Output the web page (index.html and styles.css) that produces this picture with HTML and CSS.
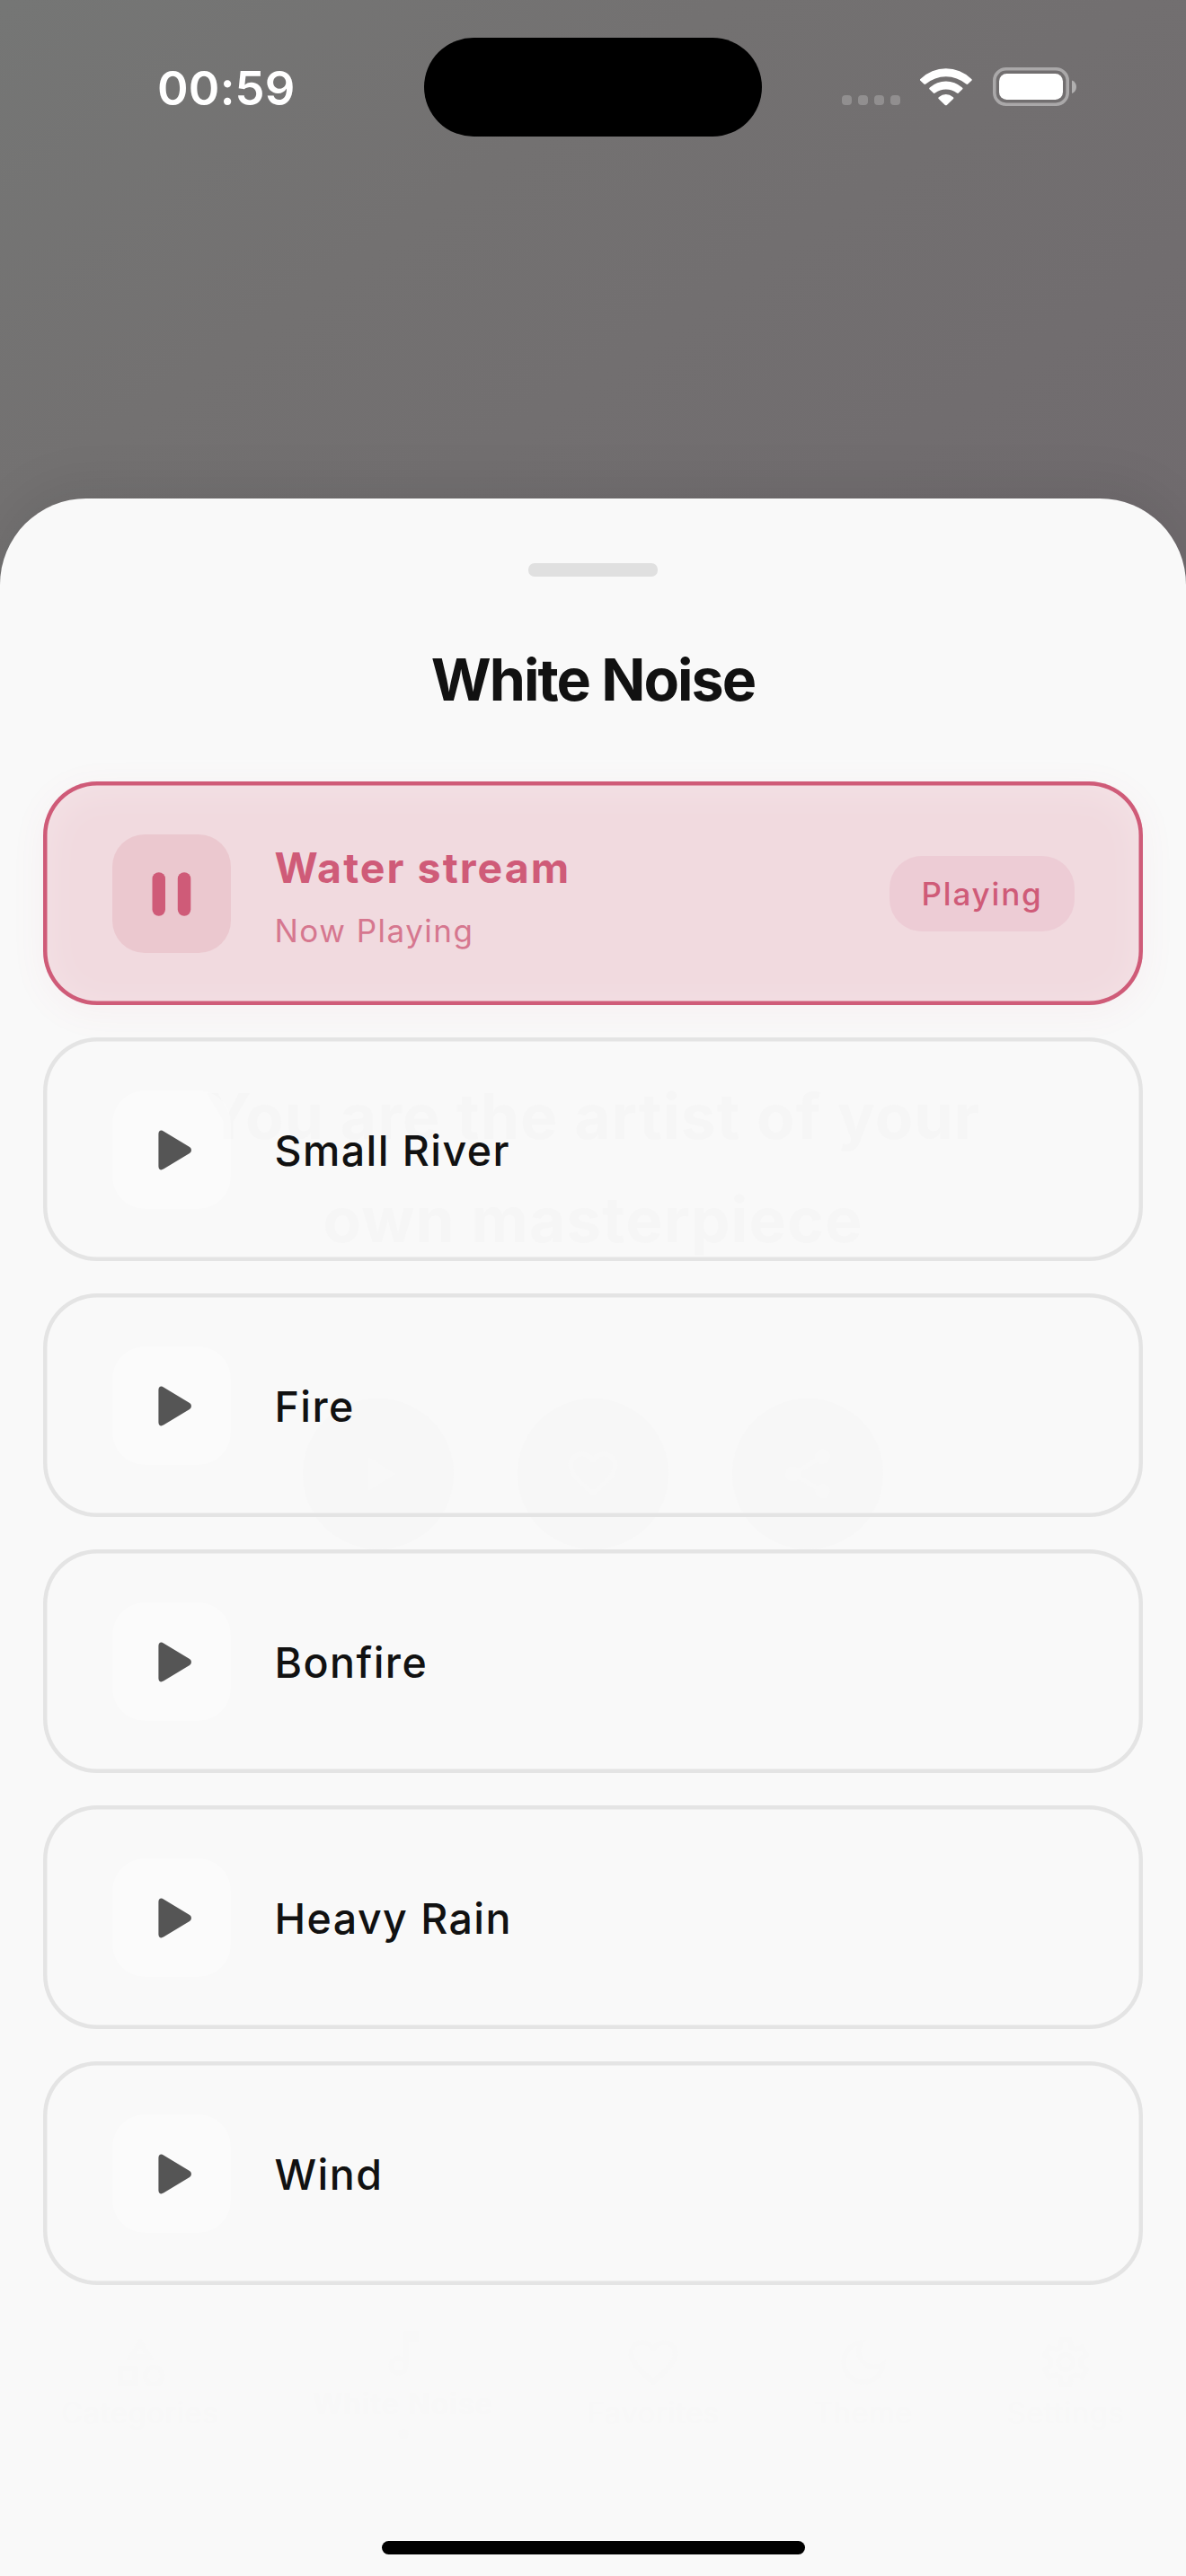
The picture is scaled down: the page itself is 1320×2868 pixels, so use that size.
FILE: index.html
```html
<!DOCTYPE html>
<html lang="en">
<head>
<meta charset="utf-8">
<title>White Noise</title>
<link rel="stylesheet" href="styles.css">
</head>
<body>
<svg width="0" height="0" class="defs" aria-hidden="true">
  <symbol id="play" viewBox="0 0 66 66"><path d="M18.4 15.5C18.4 11.8 21.2 10.6 24 12.4L53 30C55.6 31.8 55.6 35.2 53 37L24 54.6C21.2 56.4 18.4 55.2 18.4 51.5Z"/></symbol>
  <symbol id="pause" viewBox="0 0 66 66"><rect x="11.5" y="9.2" width="14.5" height="48.6" rx="7.2"/><rect x="39.8" y="9.2" width="14.5" height="48.6" rx="7.2"/></symbol>
  <symbol id="heart" viewBox="0 0 24 24"><path d="M16.5 3c-1.74 0-3.41.81-4.5 2.09C10.91 3.81 9.24 3 7.5 3 4.42 3 2 5.42 2 8.5c0 3.78 3.4 6.86 8.55 11.54L12 21.35l1.45-1.32C18.6 15.36 22 12.28 22 8.5 22 5.42 19.58 3 16.5 3zm-4.4 15.55l-.1.1-.1-.1C7.14 14.24 4 11.39 4 8.5 4 6.5 5.5 5 7.5 5c1.54 0 3.04.99 3.57 2.36h1.87C13.46 5.99 14.96 5 16.5 5c2 0 3.5 1.5 3.5 3.5 0 2.89-3.14 5.74-7.9 10.05z"/></symbol>
</svg>
<div class="phone">
  <header class="status">
    <div class="time">00:59</div>
    <div class="island"></div>
    <div class="indicators">
      <div class="cell"><i></i><i></i><i></i><i></i></div>
      <svg class="wifi" viewBox="434 105 173 127" fill="#fff">
        <path d="M436 142.500A120 120 0 0 1 604 142.500Q608 145.500 605 148L593 159.500Q590.500 162 587 159.300A105 105 0 0 0 453 159.300Q449.500 162 447 159.500L435 148Q432 145.500 436 142.500Z"/>
        <path d="M467 171A79 79 0 0 1 573 171Q578 174 575 177L562.500 189Q560 192 556 189.300A60 60 0 0 0 484 189.300Q480 192 477.500 189L465 177Q462.500 174 467 171Z"/>
        <path d="M497 202.500A36 36 0 0 1 543 202.500Q548 205.500 544.500 208.500L523 229.500Q520 232 517 229.500L495.500 208.500Q492 205.500 497 202.500Z"/>
      </svg>
      <svg class="battery" viewBox="0 0 94 43">
        <rect x="1.8" y="1.800" width="81.400" height="39.400" rx="13" fill="none" stroke="#fff" stroke-opacity=".4" stroke-width="3.600"/>
        <rect x="7" y="7" width="71" height="29" rx="8.500" fill="#fff"/>
        <path d="M88 14.500C91 15.500 93 18.200 93 21.700S91 28 88 29Z" fill="#fff" fill-opacity=".45"/>
      </svg>
    </div>
  </header>

  <main class="sheet">
    <div class="behind" aria-hidden="true">
      <p class="quote">You are the artist of your<br>own masterpiece</p>
      <div class="actions">
        <span><svg viewBox="0 0 24 24"><path d="M8 5v14l11-7z"/></svg></span>
        <span><svg viewBox="0 0 24 24"><use href="#heart"/></svg></span>
        <span><svg viewBox="0 0 24 24"><path d="M18 16.080c-.76 0-1.440.3-1.960.77L8.910 12.700c.05-.23.090-.46.090-.7s-.04-.47-.09-.7l7.050-4.110c.54.5 1.250.81 2.040.81 1.660 0 3-1.340 3-3s-1.340-3-3-3-3 1.340-3 3c0 .24.040.47.090.7L8.040 9.810C7.500 9.310 6.790 9 6 9c-1.660 0-3 1.340-3 3s1.340 3 3 3c.79 0 1.500-.31 2.040-.81l7.120 4.160c-.05.21-.08.43-.08.65 0 1.610 1.310 2.920 2.920 2.920s2.920-1.310 2.920-2.920-1.310-2.920-2.920-2.920z"/></svg></span>
      </div>
      <nav class="tabs">
        <div class="tab"><svg viewBox="0 0 24 24"><path d="M12 2l-5.500 9h11L12 2zm0 3.840L13.930 9h-3.870L12 5.840zM17.500 13c-2.490 0-4.500 2.010-4.500 4.500s2.010 4.500 4.500 4.500 4.500-2.010 4.500-4.500-2.010-4.500-4.500-4.500zm0 7c-1.380 0-2.500-1.120-2.500-2.500s1.120-2.500 2.500-2.500 2.500 1.120 2.500 2.500-1.120 2.500-2.500 2.500zM3 21.500h8v-8H3v8zm2-6h4v4H5v-4z"/></svg><span>Categories</span></div>
        <div class="tab tab-on"><svg viewBox="0 0 24 24"><path d="M12 3l.01 10.550c-.59-.34-1.270-.55-2-.55C7.790 13 6 14.790 6 17s1.790 4 4.010 4S14 19.210 14 17V7h4V3h-6zm-1.990 16c-1.100 0-2-.9-2-2s.9-2 2-2 2 .9 2 2-.9 2-2 2z"/></svg><span>White Noise</span><i></i></div>
        <div class="tab"><svg viewBox="0 0 24 24"><use href="#heart"/></svg><span>Favorites</span></div>
        <div class="tab"><svg viewBox="0 0 24 24"><path d="M9.370 5.510C9.190 6.150 9.100 6.820 9.100 7.500c0 4.080 3.320 7.400 7.400 7.400.68 0 1.350-.09 1.990-.27C17.450 17.190 14.930 19 12 19c-3.860 0-7-3.140-7-7 0-2.930 1.810-5.450 4.370-6.490zM12 3c-4.970 0-9 4.030-9 9s4.030 9 9 9 9-4.030 9-9c0-.46-.04-.92-.1-1.360-.98 1.370-2.580 2.260-4.400 2.260-2.980 0-5.400-2.420-5.400-5.400 0-1.810.89-3.420 2.260-4.400C12.920 3.040 12.460 3 12 3z"/></svg><span>Theme</span></div>
        <div class="tab"><svg viewBox="0 0 24 24"><g fill="none" stroke="#f8f8f8" stroke-width="2"><path d="M10.300 3h3.400l.5 2.800 1.900 1.100 2.600-1 1.700 3-2.100 1.800v2.600l2.100 1.800-1.700 3-2.600-1-1.900 1.100-.5 2.800h-3.400l-.5-2.800-1.900-1.100-2.600 1-1.700-3 2.100-1.800v-2.600L3.600 8.900l1.700-3 2.600 1 1.900-1.100z"/><circle cx="12" cy="12" r="3"/></g></svg><span>Settings</span></div>
      </nav>
    </div>

    <div class="content">
      <div class="handle"></div>
      <h1>White Noise</h1>
      <ul class="sounds">
        <li class="sound playing">
          <div class="toggle"><svg><use href="#pause"/></svg></div>
          <div class="label"><b>Water stream</b><small>Now Playing</small></div>
          <div class="badge">Playing</div>
        </li>
        <li class="sound"><div class="toggle"><svg><use href="#play"/></svg></div><div class="label"><b>Small River</b></div></li>
        <li class="sound"><div class="toggle"><svg><use href="#play"/></svg></div><div class="label"><b>Fire</b></div></li>
        <li class="sound"><div class="toggle"><svg><use href="#play"/></svg></div><div class="label"><b>Bonfire</b></div></li>
        <li class="sound"><div class="toggle"><svg><use href="#play"/></svg></div><div class="label"><b>Heavy Rain</b></div></li>
        <li class="sound"><div class="toggle"><svg><use href="#play"/></svg></div><div class="label"><b>Wind</b></div></li>
      </ul>
      <div class="home"></div>
    </div>
  </main>
</div>
</body>
</html>
```
FILE: styles.css
```css
* { box-sizing: border-box; margin: 0; padding: 0; }

body {
  width: 1320px;
  font-family: Inter, "Liberation Sans", sans-serif;
  color: #111;
}

.defs { position: absolute; }

.phone {
  display: flex;
  flex-direction: column;
  height: 2868px;
  overflow: hidden;
  background: linear-gradient(145deg, #757675 0%, #737171 15%, #706b6e 40%, #6b6367 100%);
}

/* Status bar */
.status {
  flex: none;
  display: grid;
  grid-template-columns: 472px 376px 472px;
  height: 555px;
  padding-top: 42px;
  align-items: start;
}

.time {
  padding: 24px 0 0 175px;
  font-size: 52.5px;
  font-weight: 600;
  line-height: 64px;
  letter-spacing: 0.2px;
  color: #fff;
}

.island {
  height: 110px;
  border-radius: 56px;
  background: #000;
}

.indicators {
  display: flex;
  align-items: flex-end;
  padding: 33px 0 0 89px;
}

.cell { display: flex; gap: 7px; padding-bottom: 1px; }
.cell i { width: 11px; height: 11px; border-radius: 4px; background: rgba(255, 255, 255, .22); }
.wifi { width: 58px; height: 43px; margin-left: 22px; }
.battery { width: 94px; height: 43px; margin-left: 23px; }

/* Bottom sheet */
.sheet {
  flex: 1;
  display: grid;
  border-radius: 96px 96px 0 0;
  background: #f9f9f9;
  box-shadow: 0 -12px 60px rgba(0, 0, 0, .08);
}

.behind, .content {
  grid-area: 1 / 1;
  display: flex;
  flex-direction: column;
  align-items: center;
}

.content { position: relative; padding-top: 72px; }

.handle { width: 144px; height: 15px; border-radius: 7px; background: #e0e0e0; }

h1 {
  margin: 76px 0 74px;
  font-size: 64.5px;
  font-weight: 700;
  line-height: 78px;
  letter-spacing: -1.95px;
}

.sounds {
  display: flex;
  flex-direction: column;
  gap: 36px;
  width: 1224px;
  list-style: none;
}

.sound {
  display: flex;
  align-items: center;
  height: 249px;
  padding: 0 76.5px;
  border-radius: 60px;
  box-shadow: inset 0 0 0 4.5px #e4e4e4;
}

.toggle {
  display: grid;
  place-items: center;
  width: 132px;
  height: 132px;
  border-radius: 36px;
  background: rgba(255, 255, 255, .3);
}

.toggle svg { width: 66px; height: 66px; fill: #555; }

.label {
  flex: 1;
  display: flex;
  flex-direction: column;
  padding: 2px 0 0 49px;
}

.label b {
  font-size: 46.5px;
  font-weight: 500;
  line-height: 60px;
  letter-spacing: 1.45px;
}

.label small {
  margin-top: 22px;
  font-size: 35px;
  line-height: 36px;
  letter-spacing: 1.5px;
  color: #d6778f;
}

.playing {
  background: #f1dadf;
  box-shadow:
    inset 0 0 0 4.5px #cf5b78,
    inset 0 6px 48px rgba(255, 255, 255, .28),
    0 8px 40px rgba(207, 91, 120, .06);
}

.playing .toggle { background: #ebc8cf; }
.playing .toggle svg { fill: #cf5b78; }
.playing .label { padding-top: 0; }
.playing .label b { font-weight: 700; letter-spacing: 2.05px; color: #cf5b78; }

.badge {
  padding: 0 35px 0 36px;
  border-radius: 36px;
  background: #edccd5;
  font-size: 35px;
  font-weight: 500;
  line-height: 84px;
  letter-spacing: 1.8px;
  color: #cf5b78;
}

.home {
  width: 471px;
  height: 15px;
  margin: auto 0 24px;
  border-radius: 8px;
  background: #000;
}

/* Player screen showing faintly through the sheet */
.quote {
  margin-top: 631px;
  font-size: 69.5px;
  font-weight: 700;
  line-height: 115px;
  letter-spacing: 1.1px;
  text-align: center;
  color: #f6f6f6;
}

.actions { display: flex; gap: 71px; margin-top: 141px; }

.actions span {
  display: grid;
  place-items: center;
  width: 168px;
  height: 168px;
  border-radius: 50%;
  background: #f7f7f7;
}

.actions svg { width: 66px; height: 66px; fill: #f8f8f8; }

.tabs {
  display: flex;
  align-items: center;
  gap: 105px;
  height: 130px;
  margin-top: 861px;
  font-size: 32px;
  line-height: 39px;
  letter-spacing: 1px;
  color: #f8f8f8;
}

.tab { display: flex; flex-direction: column; align-items: center; gap: 4px; }
.tab svg { width: 66px; height: 66px; fill: #f8f8f8; }
.tab-on { font-weight: 600; letter-spacing: 1.2px; }
.tab i { width: 12px; height: 12px; margin-top: 4px; border-radius: 50%; background: #f8f8f8; }
```
